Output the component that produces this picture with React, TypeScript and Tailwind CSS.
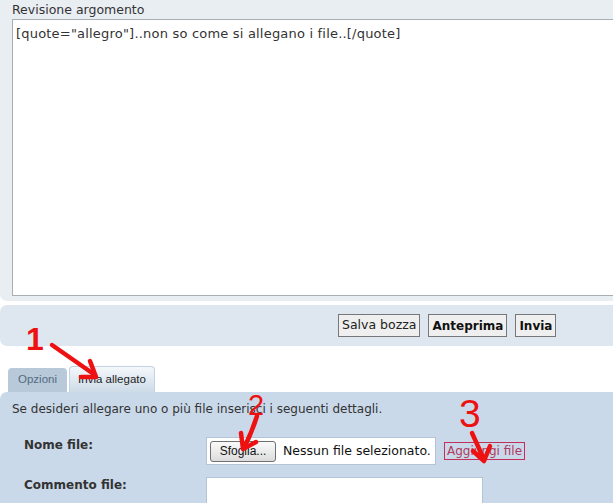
import React from 'react'

const font = "font-['DejaVu_Sans',Verdana,sans-serif]"

function Annotations() {
  return (
    <svg className="absolute inset-0 pointer-events-none" width={613} height={503} viewBox="0 0 613 503">
      <g fill="#ee1111" stroke="none" fontFamily="'Liberation Sans', Arial, sans-serif">
        <text x={26} y={350} fontSize={32} fontWeight={700}>1</text>
        <text x={248} y={415} fontSize={29}>2</text>
        <text x={459} y={427} fontSize={39}>3</text>
      </g>
      <g stroke="#ee1111" strokeWidth={4.5} strokeLinecap="round" strokeLinejoin="round" fill="none">
        {/* arrow 1 */}
        <path d="M52 345 L95 375" />
        <path d="M81 377 L96 377 L90 361" />
        {/* arrow 2 */}
        <path d="M257 416 Q252 432 244 448" />
        <path d="M241 433 L243 449 L256 442" />
        {/* arrow 3 */}
        <path d="M472 433 Q478 446 484 460" />
        <path d="M473 451 L484 461 L490 446" />
      </g>
    </svg>
  )
}

export default function App() {
  return (
    <div className={`relative w-[613px] h-[503px] overflow-hidden bg-white text-[#222] ${font}`}>
      {/* Top panel */}
      <div className="bg-[#e9eef3] rounded-bl-[7px] pl-3 pt-[1px] pb-[5px]">
        <div className="text-[12.5px] leading-[18px] text-[#333]">Revisione argomento</div>
        <div className="h-[277px] bg-white border border-[#a9aeb3] border-r-0 px-[3px] pt-[6px] text-[13px] tracking-[0.2px] leading-[16px] text-[#333]">
          [quote="allegro"]..non so come si allegano i file..[/quote]
        </div>
      </div>

      {/* Buttons bar */}
      <div className="mt-[4px] h-[41px] bg-[#dee7ef] rounded-l-[7px] flex items-center gap-2 pl-[338px]">
        <button className="h-[23px] px-[3px] bg-[#efefef] border border-[#777] text-[12.5px] text-[#222]">Salva bozza</button>
        <button className="h-[23px] px-[3px] bg-[#efefef] border border-[#777] text-[12px] font-bold text-[#111]">Anteprima</button>
        <button className="h-[23px] px-[3px] bg-[#efefef] border border-[#777] text-[12px] font-bold text-[#111]">Invia</button>
      </div>

      {/* Tabs */}
      <div className="mt-[20px] pl-[8px] flex items-end gap-[2px] h-[26px]">
        <div className="h-[24px] w-[59px] bg-[#b8c9d9] rounded-t-[4px] flex items-center justify-center text-[11.5px] text-[#536b80] font-['Liberation_Sans',Arial,sans-serif]">
          Opzioni
        </div>
        <div className="h-[26px] w-[86px] bg-gradient-to-b from-[#f4f8fb] to-[#cddbe8] border border-b-0 border-[#c2d2e0] rounded-t-[4px] flex items-center justify-center text-[11.5px] text-[#222] font-['Liberation_Sans',Arial,sans-serif]">
          Invia allegato
        </div>
      </div>

      {/* Attachment panel */}
      <div className="bg-[#c9d9e9] rounded-tl-[7px] h-[120px] pl-3 pt-[9px]">
        <div className="text-[12px] leading-[16px] text-[#333]">Se desideri allegare uno o più file inserisci i seguenti dettagli.</div>
        <div className="mt-[20px] flex items-start">
          <div className="w-[194px] pl-[12px] text-[12px] leading-[16px] font-bold text-[#333]">Nome file:</div>
          <div className="h-[28px] w-[230px] bg-white border border-[#b4c4d4] flex items-center pl-[3px] gap-[7px]">
            <span className="h-[21px] w-[66px] rounded-[3px] border border-[#707070] bg-gradient-to-b from-[#fafafa] to-[#dcdcdc] flex items-center justify-center text-[12px] text-[#111] font-['Liberation_Sans',Arial,sans-serif]">
              Sfoglia...
            </span>
            <span className="text-[12.5px] text-[#111]">Nessun file selezionato.</span>
          </div>
          <div className="ml-[8px] mt-[5px] h-[18px] px-[2px] border border-[#c0305a] text-[12px] leading-[16px] text-[#b03a60]">Aggiungi file</div>
        </div>
        <div className="mt-[12px] flex items-start">
          <div className="w-[194px] pl-[12px] text-[12px] leading-[16px] font-bold text-[#333]">Commento file:</div>
          <div className="h-[40px] w-[277px] bg-white border border-[#b4c4d4]" />
        </div>
      </div>

      <Annotations />
    </div>
  )
}
